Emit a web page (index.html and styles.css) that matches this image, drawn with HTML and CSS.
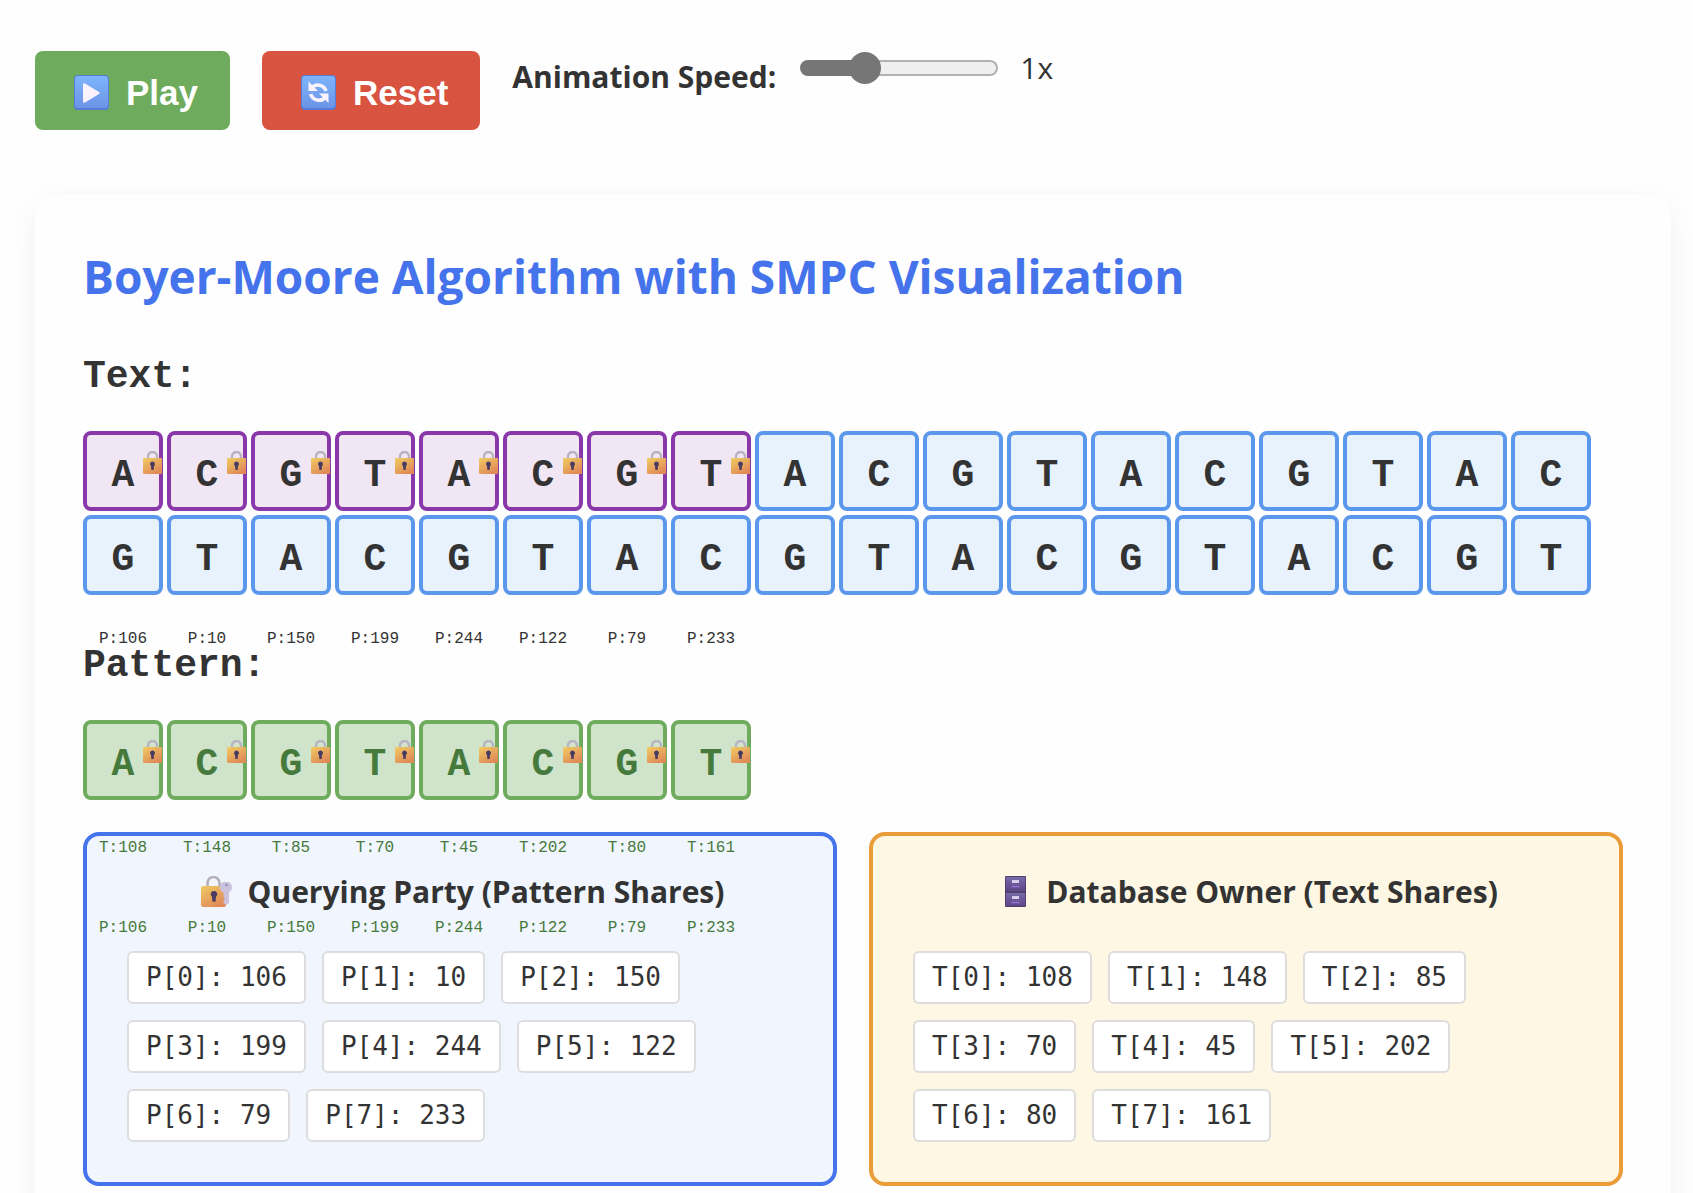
FILE: index.html
```html
<!DOCTYPE html>
<html lang="en">
<head>
<meta charset="utf-8">
<meta name="viewport" content="width=device-width, initial-scale=1">
<title>Boyer-Moore Algorithm with SMPC Visualization</title>
<link rel="stylesheet" href="styles.css">
</head>
<body>
<svg class="defs" width="0" height="0" aria-hidden="true">
  <defs>
    <linearGradient id="tile" x1="0" y1="0" x2="0" y2="1"><stop offset="0" stop-color="#7db4fb"/><stop offset="1" stop-color="#6c94e6"/></linearGradient>
    <linearGradient id="gold" x1="0" y1="0" x2="0.6" y2="1"><stop offset="0" stop-color="#f0cb62"/><stop offset="1" stop-color="#e08a58"/></linearGradient>
    <linearGradient id="cab" x1="0" y1="0" x2="0" y2="1"><stop offset="0" stop-color="#766aa8"/><stop offset="1" stop-color="#5f4886"/></linearGradient>
    <symbol id="lock" viewBox="0 0 19 23">
      <path d="M5 9V5.500a4.500 4.500 0 0 1 9 0V9" fill="none" stroke="#b9b2c2" stroke-width="2.400"/>
      <rect x="0" y="7" width="19" height="16" rx="1" fill="url(#gold)"/>
      <path d="M9.500 10.500a2.500 2.500 0 0 1 1.500 4.500l-.4 4h-2.200l-.4-4a2.500 2.500 0 0 1 1.500-4.500z" fill="#4a3b62"/>
    </symbol>
  </defs>
</svg>

<div class="controls">
  <button class="btn btn-play" type="button">
    <svg class="btn-icon" viewBox="0 0 48 36" aria-hidden="true"><rect x="7" y="0" width="35" height="35" rx="4" fill="#557cd6"/><rect x="8" y="1" width="33" height="32" rx="3" fill="url(#tile)"/><path d="M16 9.500v17q0 2 2 1l14-8.500q1.600-1 0-2l-14-8.500q-2-1-2 1z" fill="#faf3fe"/></svg>
    Play
  </button>
  <button class="btn btn-reset" type="button">
    <svg class="btn-icon" viewBox="0 0 48 36" aria-hidden="true"><rect x="7" y="0" width="35" height="35" rx="4" fill="#557cd6"/><rect x="8" y="1" width="33" height="32" rx="3" fill="url(#tile)"/><path d="M17.500 13a8.500 8.500 0 0 1 14.500 3M31.500 22a8.500 8.500 0 0 1-14.800-3" fill="none" stroke="#faf3fe" stroke-width="3.600"/><path d="M14.500 6.500v9.500h9.500zM34.500 28v-9.500h-9.500z" fill="#faf3fe"/></svg>
    Reset
  </button>
  <div class="speed">
    <label class="speed-label" for="speed">Animation Speed:</label>
    <div class="speed-control">
      <input class="slider" id="speed" type="range" min="0.2" max="3" step="0.1" value="1">
      <output class="speed-value" for="speed">1x</output>
    </div>
  </div>
</div>

<main class="panel">
  <h1 class="title">Boyer-Moore Algorithm with SMPC Visualization</h1>

  <h2 class="row-title">Text:</h2>
  <div class="cells text-cells">
    <div class="cell match">A<svg class="lock"><use href="#lock"/></svg><span class="share share-p">P:106</span></div>
    <div class="cell match">C<svg class="lock"><use href="#lock"/></svg><span class="share share-p">P:10</span></div>
    <div class="cell match">G<svg class="lock"><use href="#lock"/></svg><span class="share share-p">P:150</span></div>
    <div class="cell match">T<svg class="lock"><use href="#lock"/></svg><span class="share share-p">P:199</span></div>
    <div class="cell match">A<svg class="lock"><use href="#lock"/></svg><span class="share share-p">P:244</span></div>
    <div class="cell match">C<svg class="lock"><use href="#lock"/></svg><span class="share share-p">P:122</span></div>
    <div class="cell match">G<svg class="lock"><use href="#lock"/></svg><span class="share share-p">P:79</span></div>
    <div class="cell match">T<svg class="lock"><use href="#lock"/></svg><span class="share share-p">P:233</span></div>
    <div class="cell">A</div>
    <div class="cell">C</div>
    <div class="cell">G</div>
    <div class="cell">T</div>
    <div class="cell">A</div>
    <div class="cell">C</div>
    <div class="cell">G</div>
    <div class="cell">T</div>
    <div class="cell">A</div>
    <div class="cell">C</div>
    <div class="cell">G</div>
    <div class="cell">T</div>
    <div class="cell">A</div>
    <div class="cell">C</div>
    <div class="cell">G</div>
    <div class="cell">T</div>
    <div class="cell">A</div>
    <div class="cell">C</div>
    <div class="cell">G</div>
    <div class="cell">T</div>
    <div class="cell">A</div>
    <div class="cell">C</div>
    <div class="cell">G</div>
    <div class="cell">T</div>
    <div class="cell">A</div>
    <div class="cell">C</div>
    <div class="cell">G</div>
    <div class="cell">T</div>
  </div>

  <h2 class="row-title">Pattern:</h2>
  <div class="cells pattern-cells">
    <div class="cell pattern">A<svg class="lock"><use href="#lock"/></svg><span class="share share-t">T:108</span><span class="share share-p">P:106</span></div>
    <div class="cell pattern">C<svg class="lock"><use href="#lock"/></svg><span class="share share-t">T:148</span><span class="share share-p">P:10</span></div>
    <div class="cell pattern">G<svg class="lock"><use href="#lock"/></svg><span class="share share-t">T:85</span><span class="share share-p">P:150</span></div>
    <div class="cell pattern">T<svg class="lock"><use href="#lock"/></svg><span class="share share-t">T:70</span><span class="share share-p">P:199</span></div>
    <div class="cell pattern">A<svg class="lock"><use href="#lock"/></svg><span class="share share-t">T:45</span><span class="share share-p">P:244</span></div>
    <div class="cell pattern">C<svg class="lock"><use href="#lock"/></svg><span class="share share-t">T:202</span><span class="share share-p">P:122</span></div>
    <div class="cell pattern">G<svg class="lock"><use href="#lock"/></svg><span class="share share-t">T:80</span><span class="share share-p">P:79</span></div>
    <div class="cell pattern">T<svg class="lock"><use href="#lock"/></svg><span class="share share-t">T:161</span><span class="share share-p">P:233</span></div>
  </div>

  <div class="parties">
    <section class="party querying">
      <h3 class="party-title">
        <svg class="party-icon" viewBox="0 0 44 32" aria-hidden="true">
          <path d="M11.500 11V7a6 6 0 0 1 12 0v4" fill="none" stroke="#b5b0bd" stroke-width="2.600"/>
          <rect x="5" y="10" width="25" height="21" rx="2" fill="url(#gold)"/>
          <path d="M18 15a3.200 3.200 0 0 1 2 5.800l-.5 5h-3l-.5-5a3.200 3.200 0 0 1 2-5.800z" fill="#4a3b62"/>
          <path d="M31 6a5.300 5.300 0 0 1 2.500 9.800l-.5 2.200v9l-2.500 2-3-1.500v-3l1.500-1.500-1.500-2v-4.500a5.300 5.300 0 0 1 3.500-10.500z" fill="#cbc2de"/>
          <circle cx="30.500" cy="9" r="1.300" fill="#9c90b4"/>
        </svg>
        Querying Party (Pattern Shares)
      </h3>
      <div class="chips">
        <span class="chip">P[0]: 106</span>
        <span class="chip">P[1]: 10</span>
        <span class="chip">P[2]: 150</span>
        <span class="chip">P[3]: 199</span>
        <span class="chip">P[4]: 244</span>
        <span class="chip">P[5]: 122</span>
        <span class="chip">P[6]: 79</span>
        <span class="chip">P[7]: 233</span>
      </div>
    </section>
    <section class="party owner">
      <h3 class="party-title">
        <svg class="party-icon" viewBox="0 0 44 32" aria-hidden="true">
          <rect x="11" y="0" width="21" height="31" rx="1" fill="#51406f"/>
          <rect x="12" y="1" width="19" height="14" fill="url(#cab)"/>
          <rect x="12" y="17" width="19" height="13" fill="url(#cab)"/>
          <path d="M18 4h7v3h-7zM18 20h7v3h-7z" fill="#d9cdea"/>
          <path d="M17.500 10.500h8M17.500 26.500h8" stroke="#9670d8" stroke-width="1.500"/>
        </svg>
        Database Owner (Text Shares)
      </h3>
      <div class="chips">
        <span class="chip">T[0]: 108</span>
        <span class="chip">T[1]: 148</span>
        <span class="chip">T[2]: 85</span>
        <span class="chip">T[3]: 70</span>
        <span class="chip">T[4]: 45</span>
        <span class="chip">T[5]: 202</span>
        <span class="chip">T[6]: 80</span>
        <span class="chip">T[7]: 161</span>
      </div>
    </section>
  </div>
</main>
</body>
</html>
```
FILE: styles.css
```css
* {
  box-sizing: border-box;
}

body {
  margin: 0;
  padding: 51px 22px 0 35px;
  background: #fefefe;
  color: #333;
  font-family: "Open Sans", "Noto Sans", sans-serif;
  font-size: 30px;
}

.defs {
  position: absolute;
}

/* Playback controls */
.controls {
  display: flex;
  flex-wrap: wrap;
  align-items: flex-start;
  gap: 32px;
  margin-bottom: 64px;
}

.btn {
  display: flex;
  align-items: center;
  gap: 11px;
  height: 79px;
  padding: 4px 32px 0;
  border: 0;
  border-radius: 8px;
  color: #fff;
  font-family: "Liberation Sans", Arial, sans-serif;
  font-size: 35px;
  font-weight: bold;
}

.btn-play {
  background: #6eab5c;
}

.btn-reset {
  background: #d85340;
}

.btn-icon {
  width: 48px;
  height: 36px;
}

.speed {
  display: flex;
  align-items: flex-start;
  gap: 24px;
}

.speed-label {
  font-weight: bold;
  line-height: 52px;
}

.speed-control {
  display: flex;
  align-items: center;
  gap: 22px;
  line-height: 34px;
}

.slider {
  appearance: none;
  width: 198px;
  height: 16px;
  margin: 0;
  border: 2px solid transparent;
  border-radius: 8px;
  background:
    linear-gradient(to right, #767676 33%, transparent 33%) border-box,
    linear-gradient(#efefef, #efefef) padding-box,
    linear-gradient(#b2b2b2, #b2b2b2) border-box;
}

.slider::-webkit-slider-thumb {
  appearance: none;
  width: 32px;
  height: 32px;
  border-radius: 50%;
  background: #767676;
}

/* Visualization */
.panel {
  padding: 48px;
  border-radius: 24px;
  background: #fefefe;
  box-shadow: 0 8px 32px rgba(0, 0, 0, 0.05);
}

.title {
  margin: 0 0 40px;
  color: #4573ec;
  font-size: 46px;
  line-height: 69px;
}

.row-title {
  margin: 0 0 28px;
  font-family: "Liberation Mono", "Courier New", monospace;
  font-size: 38px;
  line-height: 52px;
}

.cells {
  display: flex;
  flex-wrap: wrap;
  gap: 4px;
  font-family: "Liberation Mono", "Courier New", monospace;
}

.text-cells {
  margin-bottom: 45px;
}

.pattern-cells {
  margin-bottom: 32px;
}

.cell {
  position: relative;
  display: flex;
  align-items: center;
  justify-content: center;
  width: 80px;
  height: 80px;
  padding-top: 8px;
  border: 4px solid #5b97eb;
  border-radius: 8px;
  background: #e7f2fd;
  font-size: 38px;
  font-weight: bold;
}

.cell.match {
  border-color: #8a38a9;
  background: #f1e6f4;
}

.cell.pattern {
  border-color: #6eab5c;
  background: #d0e4cb;
  color: #467a3c;
}

.lock {
  position: absolute;
  top: 16px;
  right: -3px;
  width: 19px;
  height: 23px;
}

.share {
  position: absolute;
  left: 0;
  right: 0;
  z-index: 1;
  font-size: 16px;
  font-weight: normal;
  line-height: 20px;
  text-align: center;
}

.share-t {
  top: 114px;
}

.share-p {
  top: 194px;
}

/* Secret shares of each party */
.parties {
  display: grid;
  grid-template-columns: 1fr 1fr;
  gap: 32px;
}

.party {
  padding: 32px;
  border: 4px solid;
  border-radius: 16px;
}

.querying {
  border-color: #4573ec;
  background: #f1f6fe;
}

.owner {
  border-color: #e99c38;
  background: #fdf7e3;
}

.party-title {
  display: flex;
  align-items: center;
  justify-content: center;
  gap: 8px;
  margin: 0 0 27px;
  font-size: 30px;
  line-height: 48px;
}

.party-icon {
  width: 44px;
  height: 32px;
}

.chips {
  display: flex;
  flex-wrap: wrap;
  gap: 16px;
  padding: 8px;
}

.chip {
  padding: 8px 17px;
  border: 2px solid #ddd;
  border-radius: 6px;
  background: #fff;
  font-family: "DejaVu Sans Mono", Consolas, monospace;
  font-size: 26px;
  line-height: 33px;
}
```
